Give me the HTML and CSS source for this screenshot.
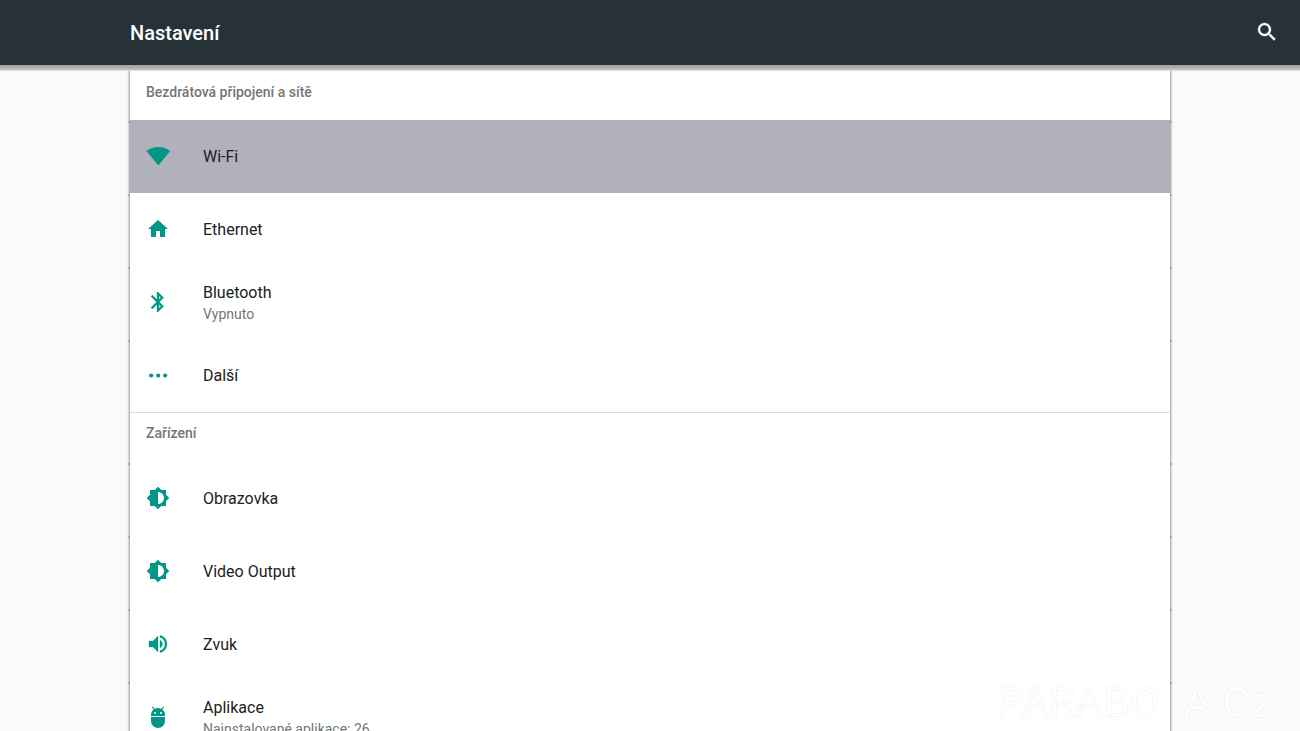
FILE: index.html
```html
<!DOCTYPE html>
<html lang="cs">
<head>
<meta charset="utf-8">
<title>Nastavení</title>
<link rel="stylesheet" href="styles.css">
</head>
<body>
<header class="bar">
  <h1 class="bar-title">Nastavení</h1>
  <button class="search" type="button" aria-label="Hledat">
    <svg class="icon" viewBox="0 0 24 24"><path d="M15.5 14h-.79l-.28-.27A6.47 6.47 0 0 0 16 9.5 6.5 6.5 0 1 0 9.5 16c1.61 0 3.09-.59 4.23-1.57l.27.28v.79l5 4.99L20.49 19l-4.99-5zm-6 0C7.01 14 5 11.99 5 9.5S7.01 5 9.5 5 14 7.01 14 9.5 11.99 14 9.5 14z" stroke="currentColor" stroke-width=".4"/></svg>
  </button>
</header>
<main class="card">
  <section class="group">
    <h2 class="heading">Bezdrátová připojení a sítě</h2>
    <a class="row selected" href="#wifi">
      <svg class="icon" viewBox="0 0 24 24"><path d="M12.300 21.500 24.200 7.100C23.700 6.700 19.200 3 12.300 3S.9 6.700.4 7.100z"/></svg>
      <span class="label">Wi-Fi</span>
    </a>
    <a class="row" href="#ethernet">
      <svg class="icon" viewBox="0 0 24 24"><path d="M10 20v-6h4v6h5v-8h3L12 3 2 12h3v8z"/></svg>
      <span class="label">Ethernet</span>
    </a>
    <a class="row" href="#bluetooth">
      <svg class="icon" viewBox="0 0 24 24"><path d="M17.710 7.710 12 2h-1v7.590L6.410 5 5 6.410 10.590 12 5 17.590 6.410 19 11 14.410V22h1l5.710-5.710-4.300-4.290 4.300-4.290zM13 5.830l1.880 1.880L13 9.590V5.830zm1.880 10.460L13 18.170v-3.760l1.880 1.880z" stroke="currentColor" stroke-width=".3"/></svg>
      <span class="label">Bluetooth<small class="summary">Vypnuto</small></span>
    </a>
    <a class="row" href="#more">
      <svg class="icon" viewBox="0 0 24 24"><circle cx="5.200" cy="12.500" r="2.100"/><circle cx="12.200" cy="12.500" r="2.100"/><circle cx="19.200" cy="12.500" r="2.100"/></svg>
      <span class="label">Další</span>
    </a>
  </section>
  <section class="group">
    <h2 class="heading">Zařízení</h2>
    <a class="row" href="#display">
      <svg class="icon" viewBox="0 0 24 24"><path d="M20 15.310 23.310 12 20 8.690V4h-4.690L12 .69 8.690 4H4v4.690L.69 12 4 15.310V20h4.690L12 23.310 15.310 20H20v-4.690zM12 18V6c3.310 0 6 2.690 6 6s-2.690 6-6 6z"/></svg>
      <span class="label">Obrazovka</span>
    </a>
    <a class="row" href="#video">
      <svg class="icon" viewBox="0 0 24 24"><path d="M20 15.310 23.310 12 20 8.690V4h-4.690L12 .69 8.690 4H4v4.690L.69 12 4 15.310V20h4.690L12 23.310 15.310 20H20v-4.690zM12 18V6c3.310 0 6 2.690 6 6s-2.690 6-6 6z"/></svg>
      <span class="label">Video Output</span>
    </a>
    <a class="row" href="#sound">
      <svg class="icon" viewBox="0 0 24 24"><path d="M3 9v6h4l5 5V4L7 9H3zm13.500 3A4.500 4.500 0 0 0 14 7.970v8.050A4.470 4.470 0 0 0 16.500 12zM14 3.230v2.060c2.890.86 5 3.540 5 6.710s-2.110 5.850-5 6.710v2.060c4.010-.91 7-4.490 7-8.770s-2.990-7.860-7-8.770z" stroke="currentColor" stroke-width=".3"/></svg>
      <span class="label">Zvuk</span>
    </a>
    <a class="row" href="#apps">
      <svg class="icon" viewBox="0 0 24 24"><path d="M5 16a7 7 0 0 0 14 0v-4H5v4zM16.120 4.370l2.100-2.100-.820-.830-2.300 2.310C14.160 3.280 13.120 3 12 3s-2.160.28-3.090.75L6.600 1.440l-.830.830 2.100 2.100C6.140 5.640 5 7.680 5 10v1h14v-1c0-2.320-1.140-4.360-2.880-5.630zM9 9a1 1 0 1 1 0-2 1 1 0 0 1 0 2zm6 0a1 1 0 1 1 0-2 1 1 0 0 1 0 2z"/></svg>
      <span class="label">Aplikace<small class="summary">Nainstalované aplikace: 26</small></span>
    </a>
  </section>
</main>
<div class="watermark">PARABO<span class="faint">L</span>A<span class="faint">.</span>Cz</div>
</body>
</html>
```
FILE: styles.css
```css
* { box-sizing: border-box; }
body {
  margin: 0;
  height: 100vh;
  overflow: hidden;
  background: #fafafa;
  color: #212121;
  font-family: Roboto, sans-serif;
}
.bar {
  display: flex;
  align-items: center;
  justify-content: space-between;
  height: 65px;
  padding: 0 21px 0 10%;
  background: #263238;
  color: #fff;
}
/* soft strip under the app bar */
.bar::after {
  content: "";
  position: absolute;
  z-index: 1;
  top: 65px;
  left: 0;
  right: 0;
  height: 6px;
  background: linear-gradient(#a0a2a2, #b4b4b4 60%, #e4e4e4);
}
.bar-title {
  margin: 0;
  font-size: 20px;
  line-height: 24px;
  font-weight: 500;
}
.search {
  display: flex;
  padding: 0;
  border: 0;
  background: none;
  color: #fff;
}
.icon {
  display: block;
  flex: none;
  width: 24px;
  height: 24px;
  margin-bottom: 1px;
  fill: currentColor;
}
.card {
  isolation: isolate;
  margin: 6px 10% 0;
  background: #fff;
  box-shadow: 0 0 2px 1px rgba(0, 0, 0, 0.4);
}
.group + .group { border-top: 1px solid #dcdcdc; }
.heading {
  height: 49px;
  margin: 0;
  padding: 12px 16px;
  color: #757575;
  font-size: 14px;
  line-height: 18px;
  font-weight: 500;
}
.group + .group .heading { padding-top: 11px; }
.row {
  position: relative;
  display: flex;
  align-items: center;
  gap: 33px;
  height: 73px;
  padding: 0 16px;
  background: #fff;
  color: #212121;
  text-decoration: none;
}
/* tile seams showing at the edges of the card */
.row::before {
  content: "";
  position: absolute;
  z-index: -1;
  top: 1px;
  left: -2px;
  right: -2px;
  height: 2px;
  background: rgba(0, 0, 0, 0.16);
}
.row .icon { color: #009688; }
.selected { background: #b0b1ba; }
.label {
  font-size: 16px;
  line-height: 22px;
}
.summary {
  display: block;
  color: #757575;
  font-size: 14px;
  line-height: 20px;
}
.watermark {
  position: fixed;
  right: 28px;
  bottom: 2px;
  color: #fff;
  font-size: 43px;
  line-height: 54px;
  font-weight: 400;
  -webkit-text-stroke: 1px rgba(0, 0, 0, 0.04);
  pointer-events: none;
}
.faint {
  color: transparent;
  -webkit-text-stroke-color: rgba(0, 0, 0, 0.01);
}
```
